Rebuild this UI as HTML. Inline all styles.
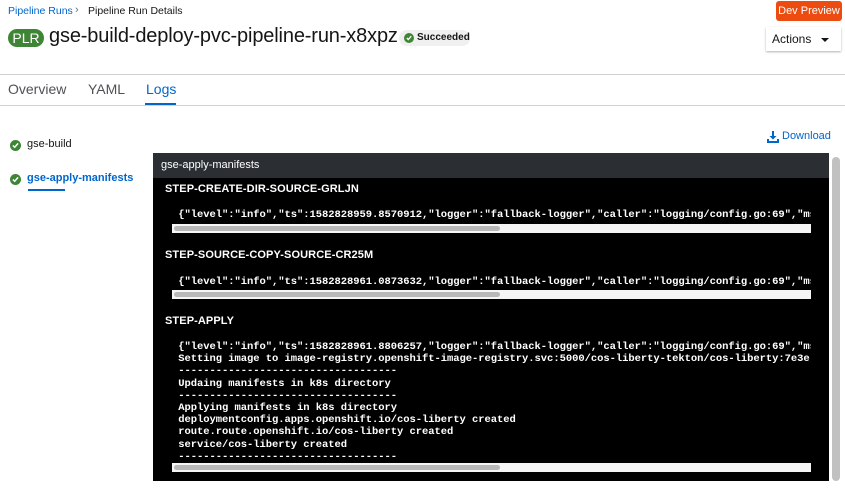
<!DOCTYPE html>
<html><head><meta charset="utf-8"><style>
*{box-sizing:border-box;margin:0;padding:0}
body{width:845px;height:488px;overflow:hidden;background:#fff;font-family:"Liberation Sans",sans-serif;color:#151515;position:relative}
.a{position:absolute}
.mono{font-family:"Liberation Mono",monospace;font-size:10.5px;color:#fff;white-space:pre;line-height:12.2px;font-weight:bold;letter-spacing:-0.05px}
.step{font-size:11px;font-weight:bold;color:#fff;letter-spacing:0.1px}
.track{background:#f5f5f5;height:9px;width:639px;left:172px}
.thumb{position:absolute;left:2px;top:2px;width:326px;height:5px;border-radius:3px;background:#b8b8b8}
.chk{width:11px;height:11px;border-radius:50%;background:#3e8635}
.chk svg{position:absolute;left:2px;top:2px}
</style></head><body>
<div class="a" style="left:8px;top:5px;font-size:10.5px;color:#06c">Pipeline Runs</div>
<div class="a" style="left:75px;top:4px;font-size:11px;color:#6a6e73">›</div>
<div class="a" style="left:88px;top:5px;font-size:10.5px;color:#151515">Pipeline Run Details</div>
<div class="a" style="left:8px;top:29px;width:36px;height:18px;border-radius:9px;background:#3e8635;color:#fff;font-size:14px;line-height:18px;text-align:center">PLR</div>
<div class="a" style="left:49px;top:25px;font-size:20px;color:#151515;letter-spacing:-0.15px;white-space:nowrap">gse-build-deploy-pvc-pipeline-run-x8xpz</div>
<div class="a" style="left:399px;top:30px;width:71px;height:16px;border-radius:8px;background:#f0f0f0;font-size:10px;font-weight:bold;line-height:16px;padding-left:18px;color:#151515">Succeeded</div>
<div class="a chk" style="left:404px;top:33px;width:10px;height:10px"><svg width="6" height="6" viewBox="0 0 6 6" style="left:2px;top:2px"><path d="M0.8 3l1.5 1.5L5.2 1.2" stroke="#fff" stroke-width="1.3" fill="none"/></svg></div>
<div class="a" style="left:776px;top:1px;width:66px;height:20px;border-radius:3px;background:#ec4c0f;color:#fff;font-size:11px;line-height:20px;text-align:center">Dev Preview</div>
<div class="a" style="left:766px;top:27px;width:75px;height:24px;background:#fff;box-shadow:0 1px 2px rgba(0,0,0,.3);font-size:12px;line-height:24px;padding-left:6px">Actions</div>
<div class="a" style="left:821px;top:38px;border-left:4px solid transparent;border-right:4px solid transparent;border-top:4px solid #151515"></div>
<div class="a" style="left:0;top:74px;width:845px;height:1px;background:#d2d2d2"></div>
<div class="a" style="left:8px;top:81px;font-size:14px;color:#4f5255">Overview</div>
<div class="a" style="left:88px;top:81px;font-size:14px;color:#4f5255">YAML</div>
<div class="a" style="left:146px;top:81px;font-size:14px;color:#06c">Logs</div>
<div class="a" style="left:145px;top:103px;width:31px;height:3px;background:#06c"></div>
<div class="a" style="left:0;top:105px;width:845px;height:1px;background:#d2d2d2"></div>
<div class="a chk" style="left:10px;top:140px"><svg width="7" height="7" viewBox="0 0 6 6"><path d="M0.8 3l1.5 1.5L5.2 1.2" stroke="#fff" stroke-width="1.3" fill="none"/></svg></div>
<div class="a" style="left:27px;top:138px;font-size:11px">gse-build</div>
<div class="a chk" style="left:10px;top:174px"><svg width="7" height="7" viewBox="0 0 6 6"><path d="M0.8 3l1.5 1.5L5.2 1.2" stroke="#fff" stroke-width="1.3" fill="none"/></svg></div>
<div class="a" style="left:27px;top:172px;font-size:11px;color:#06c;font-weight:bold">gse-apply-manifests</div>
<div class="a" style="left:28px;top:189px;width:37px;height:2px;background:#06c"></div>
<svg class="a" style="left:767px;top:131px" width="12" height="12" viewBox="0 0 12 12"><path d="M5 0h2v5h2.5L6 8.5 2.5 5H5z" fill="#06c"/><path d="M0 8h2v2h8V8h2v4H0z" fill="#06c"/></svg>
<div class="a" style="left:782px;top:130px;font-size:11px;color:#06c">Download</div>
<div class="a" style="left:153px;top:153px;width:676px;height:328px;background:#000"></div>
<div class="a" style="left:153px;top:153px;width:676px;height:25px;background:#2b2f33;color:#fff;font-size:11px;line-height:25px;padding-left:8px">gse-apply-manifests</div>
<div class="a" style="left:832px;top:157px;width:8px;height:324px;border-radius:4px;background:#c1c1c1"></div>
<div class="a step" style="left:165px;top:183px">STEP-CREATE-DIR-SOURCE-GRLJN</div>
<div class="a mono" style="left:172px;top:209px;width:639px;overflow:hidden"> {"level":"info","ts":1582828959.8570912,"logger":"fallback-logger","caller":"logging/config.go:69","msg"</div>
<div class="a track" style="top:224px"><div class="thumb"></div></div>
<div class="a step" style="left:165px;top:249px">STEP-SOURCE-COPY-SOURCE-CR25M</div>
<div class="a mono" style="left:172px;top:276px;width:639px;overflow:hidden"> {"level":"info","ts":1582828961.0873632,"logger":"fallback-logger","caller":"logging/config.go:69","msg"</div>
<div class="a track" style="top:290px"><div class="thumb"></div></div>
<div class="a step" style="left:165px;top:315px">STEP-APPLY</div>
<div class="a mono" style="left:172px;top:341px;width:639px;overflow:hidden"> {"level":"info","ts":1582828961.8806257,"logger":"fallback-logger","caller":"logging/config.go:69","msg"
 Setting image to image-registry.openshift-image-registry.svc:5000/cos-liberty-tekton/cos-liberty:7e3e
 -----------------------------------
 Updaing manifests in k8s directory
 -----------------------------------
 Applying manifests in k8s directory
 deploymentconfig.apps.openshift.io/cos-liberty created
 route.route.openshift.io/cos-liberty created
 service/cos-liberty created
 -----------------------------------</div>
<div class="a track" style="top:463px"><div class="thumb"></div></div>
</body></html>
